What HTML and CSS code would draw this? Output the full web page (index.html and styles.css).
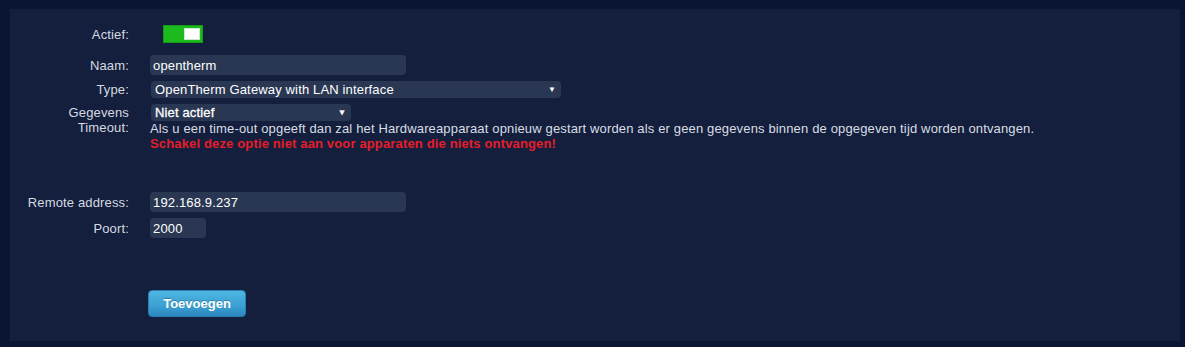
FILE: index.html
```html
<!DOCTYPE html>
<html lang="nl">
<head>
    <meta charset="UTF-8">
    <title>Hardware</title>
    <link rel="stylesheet" href="styles.css">
</head>
<body>
    <div class="panel">
        <form class="hw-form">
            <div class="row row-active">
                <label class="lbl">Actief:</label>
                <div class="field">
                    <span class="toggle"><span class="knob"></span></span>
                </div>
            </div>
            <div class="row row-name">
                <label class="lbl">Naam:</label>
                <div class="field"><input class="text wide" type="text" value="opentherm"></div>
            </div>
            <div class="row row-type">
                <label class="lbl">Type:</label>
                <div class="field">
                    <div class="select type-select">OpenTherm Gateway with LAN interface<span class="caret">&#9660;</span></div>
                </div>
            </div>
            <div class="row row-timeout">
                <label class="lbl">Gegevens<br>Timeout:</label>
                <div class="field">
                    <div class="select timeout-select">Niet actief<span class="caret">&#9660;</span></div>
                    <p class="help">Als u een time-out opgeeft dan zal het Hardwareapparaat opnieuw gestart worden als er geen gegevens binnen de opgegeven tijd worden ontvangen.</p>
                    <p class="warn">Schakel deze optie niet aan voor apparaten die niets ontvangen!</p>
                </div>
            </div>
            <div class="row row-address">
                <label class="lbl">Remote address:</label>
                <div class="field"><input class="text wide" type="text" value="192.168.9.237"></div>
            </div>
            <div class="row row-port">
                <label class="lbl">Poort:</label>
                <div class="field"><input class="text port" type="text" value="2000"></div>
            </div>
            <div class="actions">
                <button type="button" class="btn">Toevoegen</button>
            </div>
        </form>
    </div>
</body>
</html>
```

FILE: styles.css
```css
html, body {
    height: 100%;
}

body {
    margin: 0;
    padding: 9px 5px 6px 10px;
    box-sizing: border-box;
    background-color: #0a1533;
    font-family: 'Liberation Sans', Arial, sans-serif;
    font-size: 13px;
    letter-spacing: 0.15px;
    color: #d9dde4;
}

.panel {
    height: 100%;
    background-color: #131f3c;
    box-sizing: border-box;
    padding-top: 16px;
}

.hw-form {
    display: flex;
    flex-direction: column;
}

.row {
    display: flex;
    align-items: flex-start;
}

.lbl {
    width: 119px;
    flex-shrink: 0;
    text-align: right;
    margin-right: 21px;
    line-height: 15px;
    color: #d6dae2;
}

.field {
    display: flex;
    flex-direction: column;
}

/* toggle */
.row-active {
    height: 18px;
    align-items: center;
}

.toggle {
    display: block;
    margin-left: 13px;
    width: 38px;
    height: 16px;
    background-color: #1dba1d;
    border: 1px solid #159a15;
    position: relative;
}

.knob {
    position: absolute;
    right: 2px;
    top: 2px;
    width: 16px;
    height: 12px;
    background-color: #ffffff;
    border: 1px solid #c9e9c9;
    box-sizing: border-box;
}

/* inputs */
.text {
    box-sizing: border-box;
    height: 20px;
    border: none;
    border-radius: 4px;
    background-color: #2a3753;
    color: #ffffff;
    font-family: 'Liberation Sans', Arial, sans-serif;
    font-size: 13px;
    letter-spacing: 0.15px;
    padding: 0 3px;
    margin: 0;
}

.wide {
    width: 256px;
}

.port {
    width: 56px;
}

.select {
    box-sizing: border-box;
    height: 17px;
    line-height: 17px;
    border-radius: 4px;
    background-color: #2a3753;
    color: #ffffff;
    font-size: 13px;
    padding: 0 4px;
    margin-left: 1px;
    position: relative;
}

.caret {
    position: absolute;
    right: 5px;
    top: 0;
    font-size: 8px;
}

.type-select {
    width: 410px;
}

.timeout-select {
    width: 200px;
    -webkit-text-stroke: 0.3px #ffffff;
}

.row-name {
    margin-top: 12px;
    height: 20px;
    align-items: center;
}

.row-type {
    margin-top: 6px;
    align-items: center;
}

.row-timeout {
    margin-top: 6px;
}

.row-timeout .lbl {
    margin-top: 1px;
}

.help, .warn {
    margin: 0;
    line-height: 15px;
    white-space: nowrap;
}

.help {
    color: #d9dde4;
}

.warn {
    color: #e51d2a;
    font-weight: bold;
    letter-spacing: 0.15px;
}

.row-address {
    margin-top: 41px;
    align-items: center;
}

.row-port {
    margin-top: 6px;
    align-items: center;
}

.actions {
    margin-top: 52px;
    padding-left: 138px;
}

.btn {
    width: 98px;
    height: 27px;
    border: 1px solid #2a7fb4;
    border-radius: 4px;
    background: linear-gradient(to bottom, #4fb6e0 0%, #3a9fd2 60%, #2b87bf 100%);
    color: #ffffff;
    font-family: 'Liberation Sans', Arial, sans-serif;
    font-size: 13px;
    font-weight: bold;
    text-shadow: 0 -1px 0 rgba(0, 0, 0, 0.25);
    cursor: pointer;
}
```
